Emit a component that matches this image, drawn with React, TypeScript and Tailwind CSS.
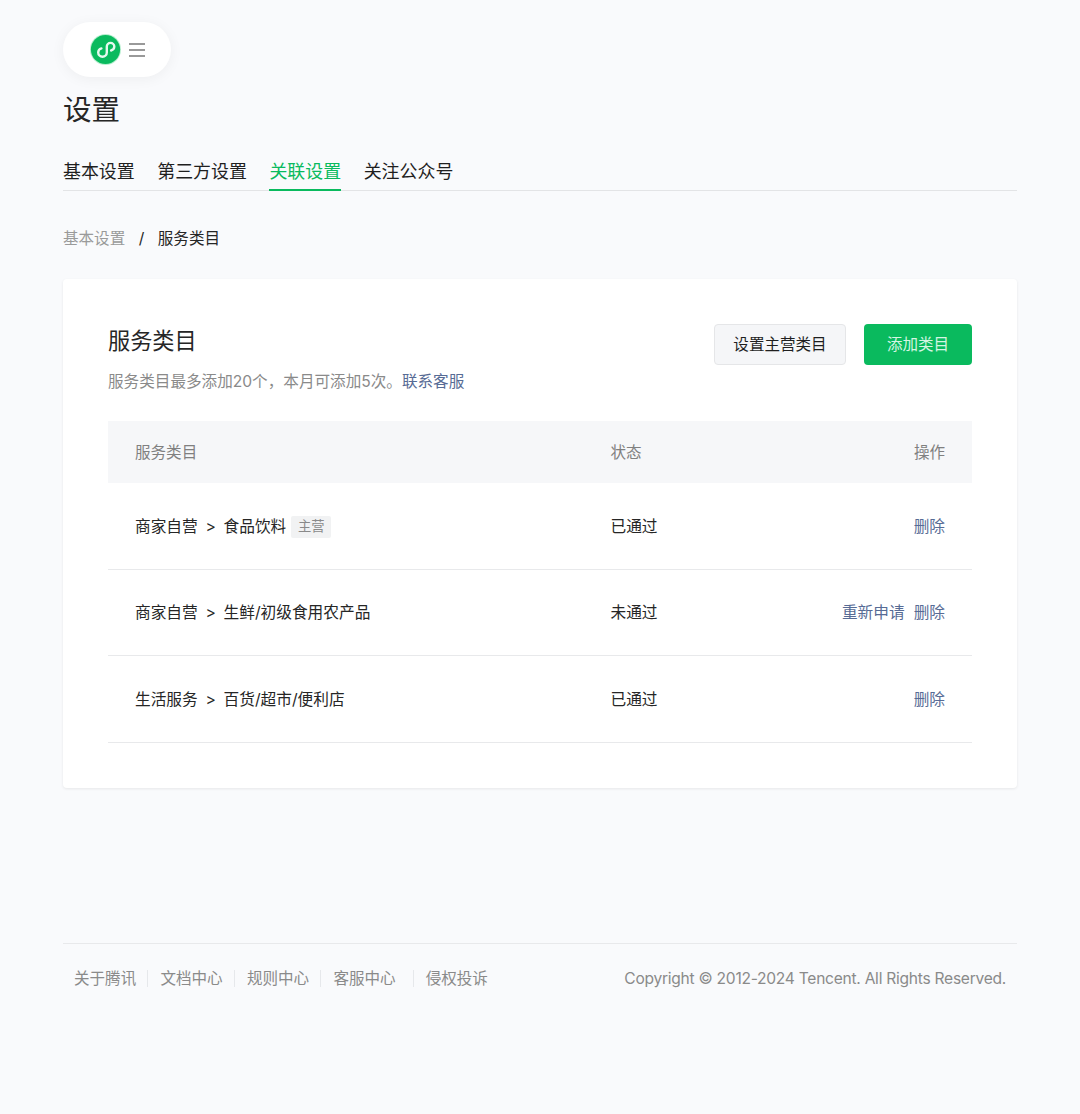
const FONT = "font-['Inter','Noto_Sans_CJK_SC',sans-serif]";

function Logo() {
  return (
    <svg width="31" height="31" viewBox="0 0 31 31" fill="none">
      <circle cx="15.5" cy="15.5" r="15.5" fill="#b8efd0" />
      <circle cx="15.5" cy="15.5" r="14.6" fill="#0aba5e" />
      <path
        d="M11.4 14.4c-1.9.6-3.2 2.2-3.2 4.1 0 2.4 1.9 4.2 4.3 4.2s4.3-1.8 4.3-4.2v-5.8c0-2.1 1.6-3.8 3.7-3.8s3.8 1.7 3.8 3.7c0 1.8-1.3 3.4-3.2 3.9"
        stroke="#e6f9ef"
        strokeWidth="2.4"
        strokeLinecap="round"
      />
    </svg>
  );
}

function Row({ a, b, tag, status, retry }: { a: string; b: string; tag?: boolean; status: string; retry?: boolean }) {
  return (
    <div className="flex h-[86.5px] items-center border-b border-[#e8e9eb] px-[27px] pt-[2px] text-[15.7px] text-[#262626]">
      <div className="flex w-[475.5px] items-center">
        <span>{a}</span>
        <span className="mx-[7.7px]">&gt;</span>
        <span>{b}</span>
        {tag && (
          <span className="ml-[5px] flex h-[22px] w-[40px] items-center justify-center rounded-[2px] bg-[#f1f2f3] text-[13.3px] text-[#8a8a8a]">
            主营
          </span>
        )}
      </div>
      <div className="flex-1">{status}</div>
      <div className="flex gap-[9px] text-[#576b95]">
        {retry && <span>重新申请</span>}
        <span>删除</span>
      </div>
    </div>
  );
}

function FooterLink({ label, last, extra }: { label: string; last?: boolean; extra?: boolean }) {
  return (
    <>
      <span>{label}</span>
      {!last && <span className={`h-[17px] w-px bg-[#e6e8eb] ${extra ? "ml-[17px] mr-[12px]" : "ml-[11.3px] mr-[12px]"}`} />}
    </>
  );
}

export default function App() {
  return (
    <div className={`${FONT} min-h-[1114px] bg-[#f9fafc] px-[63px] pt-[22px]`}>
      <div className="flex h-[55px] w-[108px] items-center justify-center gap-[8px] rounded-full bg-white shadow-[0_2px_14px_rgba(0,0,0,0.05)]">
        <Logo />
        <div className="flex w-[16px] flex-col gap-[4px]">
          <span className="h-[2px] bg-[#999999]" />
          <span className="h-[2px] bg-[#999999]" />
          <span className="h-[2px] bg-[#999999]" />
        </div>
      </div>

      <h1 className="mt-[13px] text-[28.5px] leading-[40px] font-normal text-[#262626]">设置</h1>

      <div className="mt-[24px] flex h-[37px] gap-[22.5px] border-b border-[#e3e4e6] text-[17.95px] text-[#1f1f1f]">
        <span className="leading-[36px]">基本设置</span>
        <span className="leading-[36px]">第三方设置</span>
        <span className="h-[37px] border-b-2 border-[#0aba5e] leading-[36px] text-[#0aba5e]">关联设置</span>
        <span className="leading-[36px]">关注公众号</span>
      </div>

      <div className="mt-[36px] flex text-[15.55px] leading-[24px]">
        <span className="text-[#9a9a9a]">基本设置</span>
        <span className="mx-[13.5px] text-[#262626]">/</span>
        <span className="text-[#262626]">服务类目</span>
      </div>

      <div className="mt-[28px] h-[509px] rounded-[4px] bg-white px-[45px] pt-[45px] shadow-[0_1px_3px_rgba(0,0,0,0.08)]">
        <div className="flex items-start justify-between">
          <div>
            <div className="text-[22.2px] leading-[34px] text-[#262626]">服务类目</div>
            <div className="mt-[12px] text-[15.6px] leading-[24px] text-[#8a8a8a]">
              服务类目最多添加20个，本月可添加5次。<span className="text-[#576b95]">联系客服</span>
            </div>
          </div>
          <div className="flex gap-[18px] text-[15.55px]">
            <button className="h-[41px] w-[132px] rounded-[4px] border border-[#e5e6e8] bg-[#f5f6f8] text-[#1f1f1f]">
              设置主营类目
            </button>
            <button className="h-[41px] w-[108px] rounded-[4px] bg-[#0aba5e] text-[#d5f5e3]">添加类目</button>
          </div>
        </div>

        <div className="mt-[27px] flex h-[62px] items-center bg-[#f6f7f9] px-[27px] pt-[1px] text-[15.55px] text-[#808080]">
          <div className="w-[475.5px]">服务类目</div>
          <div className="flex-1">状态</div>
          <div>操作</div>
        </div>
        <Row a="商家自营" b="食品饮料" tag status="已通过" />
        <Row a="商家自营" b="生鲜/初级食用农产品" status="未通过" retry />
        <Row a="生活服务" b="百货/超市/便利店" status="已通过" />
      </div>

      <div className="mt-[155px] flex h-[70px] items-center justify-between border-t border-[#e8e9eb] px-[11px] text-[15.55px] text-[#8a8a8a]">
        <div className="flex items-center">
          <FooterLink label="关于腾讯" />
          <FooterLink label="文档中心" />
          <FooterLink label="规则中心" />
          <FooterLink label="客服中心" extra />
          <FooterLink label="侵权投诉" last />
        </div>
        <div className="tracking-[-0.25px]">Copyright © 2012-2024 Tencent. All Rights Reserved.</div>
      </div>
    </div>
  );
}
